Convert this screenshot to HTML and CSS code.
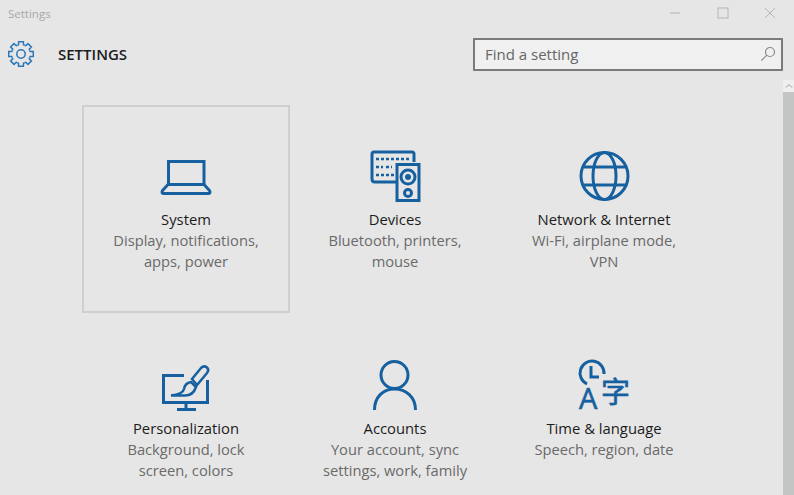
FILE: index.html
```html
<!DOCTYPE html>
<html lang="en">
<head>
    <meta charset="UTF-8">
    <meta name="viewport" content="width=device-width, initial-scale=1.0">
    <title>Settings</title>
    <link rel="stylesheet" href="styles.css">
</head>
<body>

    <!-- Title bar -->
    <div class="title-bar">
        <span class="title-text">Settings</span>
        <div class="window-buttons">
            <span class="window-button"><svg viewBox="0 0 12 12"><path d="M1 6H11"/></svg></span>
            <span class="window-button"><svg viewBox="0 0 12 12"><rect x="1" y="1" width="10" height="10"/></svg></span>
            <span class="window-button"><svg viewBox="0 0 12 12"><path d="M1 1L11 11M11 1L1 11"/></svg></span>
        </div>
    </div>

    <!-- Header -->
    <div class="header">
        <svg class="gear" viewBox="1 1 26 26">
            <circle cx="14" cy="14" r="4.2"/>
            <path d="M10.4 5.2L11.5 4.8L11.6 1.7H16.4L16.5 4.8L17.6 5.2"/>
            <path transform="rotate(45 14 14)" d="M10.4 5.2L11.5 4.8L11.6 1.7H16.4L16.5 4.8L17.6 5.2"/>
            <path transform="rotate(90 14 14)" d="M10.4 5.2L11.5 4.8L11.6 1.7H16.4L16.5 4.8L17.6 5.2"/>
            <path transform="rotate(135 14 14)" d="M10.4 5.2L11.5 4.8L11.6 1.7H16.4L16.5 4.8L17.6 5.2"/>
            <path transform="rotate(180 14 14)" d="M10.4 5.2L11.5 4.8L11.6 1.7H16.4L16.5 4.8L17.6 5.2"/>
            <path transform="rotate(225 14 14)" d="M10.4 5.2L11.5 4.8L11.6 1.7H16.4L16.5 4.8L17.6 5.2"/>
            <path transform="rotate(270 14 14)" d="M10.4 5.2L11.5 4.8L11.6 1.7H16.4L16.5 4.8L17.6 5.2"/>
            <path transform="rotate(315 14 14)" d="M10.4 5.2L11.5 4.8L11.6 1.7H16.4L16.5 4.8L17.6 5.2"/>
        </svg>
        <h1>SETTINGS</h1>
        <div class="search">
            <span>Find a setting</span>
            <svg viewBox="0 0 16 16"><circle cx="10" cy="6" r="4.5"/><path d="M6.8 9.2L1.5 14.5"/></svg>
        </div>
    </div>

    <div class="main">
        <div class="tiles">
            <div class="tile selected">
                <svg class="icon" viewBox="0 0 64 52">
                    <path d="M14.500 34V11.500H50V34"/>
                    <path d="M14 34.500H50L55.500 40.500Q57 43.500 54 43.500H10Q7 43.500 8.500 40.500Z"/>
                </svg>
                <h2>System</h2>
                <p>Display, notifications,<br>apps, power</p>
            </div>
            <div class="tile">
                <svg class="icon" viewBox="0 0 64 52">
                    <path d="M51 12V4Q51 2 49 2H11Q9 2 9 4V29Q9 32 12 32H33"/>
                    <rect x="34" y="14.500" width="22" height="36"/>
                    <circle cx="45" cy="27" r="7"/>
                    <circle cx="45" cy="27" r="1.500"/>
                    <circle cx="45" cy="43" r="3.500"/>
                    <path class="keys" d="M13 9H47M13 17H20M23 17H29M13 25H31"/>
                </svg>
                <h2>Devices</h2>
                <p>Bluetooth, printers,<br>mouse</p>
            </div>
            <div class="tile">
                <svg class="icon" viewBox="0 0 64 52">
                    <circle cx="32.500" cy="26" r="23.500"/>
                    <ellipse cx="32.500" cy="26" rx="11.500" ry="23.500"/>
                    <path d="M12 17H53M12 35H53"/>
                </svg>
                <h2>Network &amp; Internet</h2>
                <p>Wi-Fi, airplane mode,<br>VPN</p>
            </div>
            <div class="tile">
                <svg class="icon" viewBox="0 0 64 52">
                    <path d="M30 16.500H9.500V43.500H53.500V21"/>
                    <path d="M32 43V50M23 50.500H42"/>
                    <path class="brush" d="M38 20L47 9Q50 6 53 8.500Q55.500 11 53 14L43 26Z"/>
                    <path class="brush" d="M37 23Q31 24 30 30Q29 35 17 36.500H30Q39 37 42 28Z"/>
                </svg>
                <h2>Personalization</h2>
                <p>Background, lock<br>screen, colors</p>
            </div>
            <div class="tile">
                <svg class="icon" viewBox="0 0 64 52">
                    <circle cx="31.500" cy="16" r="13.500"/>
                    <path d="M11.500 51C11.500 38 20 30 31.500 30S52.500 38 52.500 51"/>
                </svg>
                <h2>Accounts</h2>
                <p>Your account, sync<br>settings, work, family</p>
            </div>
            <div class="tile">
                <svg class="icon" viewBox="0 0 64 52">
                    <path d="M15 25A12 12 0 1 1 32 15"/>
                    <path d="M19 7V18H27"/>
                    <text class="icon-latin" x="7" y="50">A</text>
                    <text class="icon-cjk" x="29" y="44">字</text>
                </svg>
                <h2>Time &amp; language</h2>
                <p>Speech, region, date</p>
            </div>
        </div>
        <div class="scrollbar">
            <div class="scroll-up"><svg viewBox="0 0 8 8"><path d="M1 5.500L4 2.500L7 5.500"/></svg></div>
            <div class="scroll-thumb"></div>
        </div>
    </div>

</body>
</html>
```

FILE: styles.css
```css
* {
    margin: 0;
    padding: 0;
    box-sizing: border-box;
    font-family: "Open Sans", "Noto Sans", sans-serif;
}
body {
    width: 794px;
    height: 495px;
    background-color: #e6e6e6;
    overflow: hidden;
}
/* Title bar */
.title-bar {
    height: 26px;
    display: flex;
    align-items: center;
    justify-content: space-between;
}
.title-text {
    font-size: 11.5px;
    color: #a8a8a8;
    padding-left: 8px;
}
.window-buttons {
    display: flex;
}
.window-button {
    width: 47.5px;
    display: flex;
    justify-content: center;
}
.window-button svg {
    width: 12px;
    height: 12px;
    fill: none;
    stroke: #b4b4b4;
}
/* Header */
.header {
    height: 54px;
    display: flex;
    align-items: center;
    padding: 2px 0 0 8px;
}
.gear {
    width: 26px;
    height: 26px;
    fill: none;
    stroke: #2a77b8;
    stroke-width: 1.5;
}
.header h1 {
    font-size: 15px;
    font-weight: 600;
    color: #1c1c1c;
    margin-left: 24px;
}
.search {
    width: 310px;
    height: 33px;
    margin-left: auto;
    margin-right: 11px;
    background: #f0f0f0;
    border: 2px solid #7b7b7b;
    display: flex;
    align-items: center;
    justify-content: space-between;
    padding: 0 5px 0 10px;
}
.search span {
    font-size: 15px;
    color: #666;
}
.search svg {
    width: 16px;
    height: 16px;
    fill: none;
    stroke: #888;
    stroke-width: 1.2;
}
/* Tiles */
.main {
    display: flex;
    height: 415px;
}
.tiles {
    flex: 1;
    display: grid;
    grid-template-columns: repeat(3, 208px);
    grid-auto-rows: 208px;
    gap: 1px;
    padding: 25px 0 0 82px;
    overflow: hidden;
}
.tile {
    border: 2px solid transparent;
    padding-top: 43px;
    text-align: center;
}
.selected {
    border-color: #cfcfcf;
}
.icon {
    display: block;
    width: 64px;
    height: 52px;
    margin: 0 auto 7px;
    fill: none;
    stroke: #16609f;
    stroke-width: 3;
    overflow: visible;
}
.icon .keys {
    stroke-width: 2.5;
    stroke-dasharray: 3 2;
}
.icon .brush {
    stroke-width: 2.5;
}
.icon text {
    fill: #16609f;
    stroke: #16609f;
    stroke-width: 0.6;
}
.icon-latin {
    font-size: 29px;
}
.icon-cjk {
    font-family: "Noto Sans CJK SC", sans-serif;
    font-size: 29px;
}
.tile h2 {
    font-size: 14.8px;
    font-weight: 400;
    line-height: 21px;
    color: #1c1c1c;
}
.tile p {
    font-size: 14.7px;
    line-height: 21px;
    color: #6a6a6a;
}
/* Scrollbar */
.scrollbar {
    width: 11px;
    display: flex;
    flex-direction: column;
}
.scroll-up {
    height: 12px;
    background: #efefef;
    display: flex;
    align-items: center;
    justify-content: center;
}
.scroll-up svg {
    width: 8px;
    height: 8px;
    fill: none;
    stroke: #999;
}
.scroll-thumb {
    flex: 1;
    background: #c3c5c5;
}
```
